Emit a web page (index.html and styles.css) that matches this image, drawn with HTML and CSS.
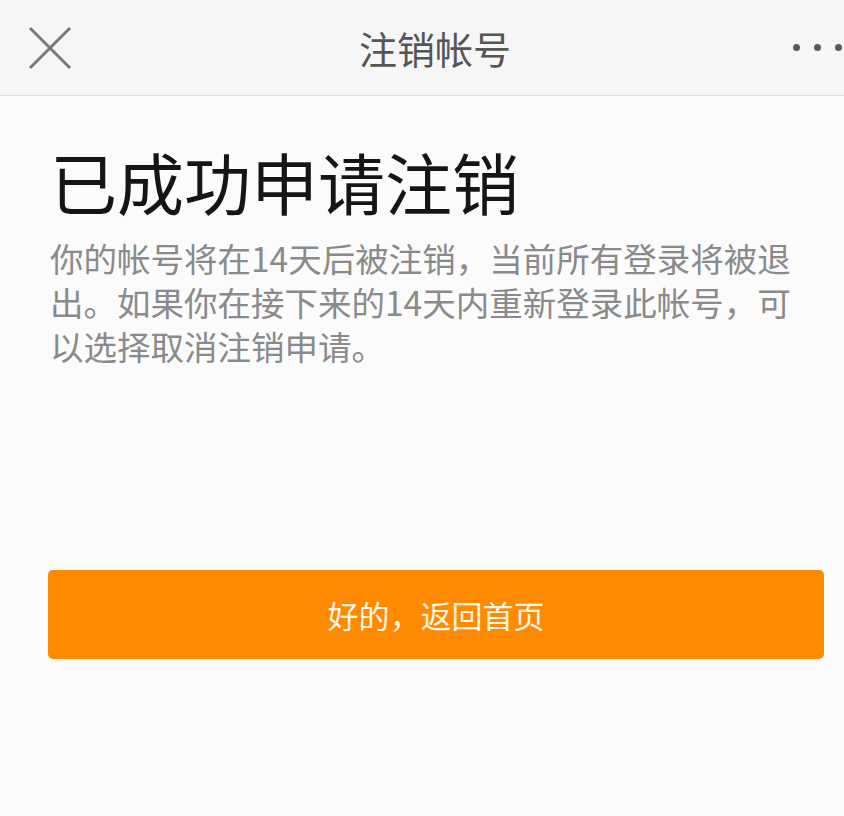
FILE: index.html
```html
<!DOCTYPE html>
<html>
<head>
  <meta charset="utf-8">
  <title>注销帐号</title>
  <link rel="stylesheet" href="styles.css">
</head>
<body>

<div class="topbar">
  <div class="close">
    <svg width="44" height="44" viewBox="0 0 44 44">
      <path d="M2 2 L42 42 M42 2 L2 42" stroke="#7a7a7a" stroke-width="3" fill="none"/>
    </svg>
  </div>
  <div class="title">注销帐号</div>
  <div class="more">
    <span></span><span></span><span></span>
  </div>
</div>

<div class="content">
  <h1>已成功申请注销</h1>
  <p class="desc">你的帐号将在14天后被注销，当前所有登录将被退出。如果你在接下来的14天内重新登录此帐号，可以选择取消注销申请。</p>
  <button class="back">好的，返回首页</button>
</div>

</body>
</html>
```

FILE: styles.css
```css
body { margin: 0; background: #fbfbfc; font-family: "Noto Sans CJK SC", "Noto Sans", sans-serif; }

.topbar { height: 95px; display: grid; grid-template-columns: 1fr auto 1fr; align-items: center; padding: 0 2px 0 28px; background: #f6f6f7; border-bottom: 1px solid #dedede; }
.close { display: flex; }
.title { font-size: 38px; color: #555; }
.more { display: flex; justify-content: flex-end; gap: 14px; }
.more span { width: 7px; height: 7px; border-radius: 50%; background: #5a5a5a; }

.content { padding: 45px 20px 0 48px; }
h1 { margin: 0 0 15px 2px; font-size: 67px; font-weight: normal; line-height: 80px; color: #151515; }
.desc { margin: 0 0 202px 2px; width: 752px; font-size: 33.5px; line-height: 44px; color: #8a8a8a; }
.back { display: block; width: 776px; height: 89px; border: none; border-radius: 5px; background: #ff8a00; color: #fff6e6; font-family: inherit; font-size: 31px; }
```
